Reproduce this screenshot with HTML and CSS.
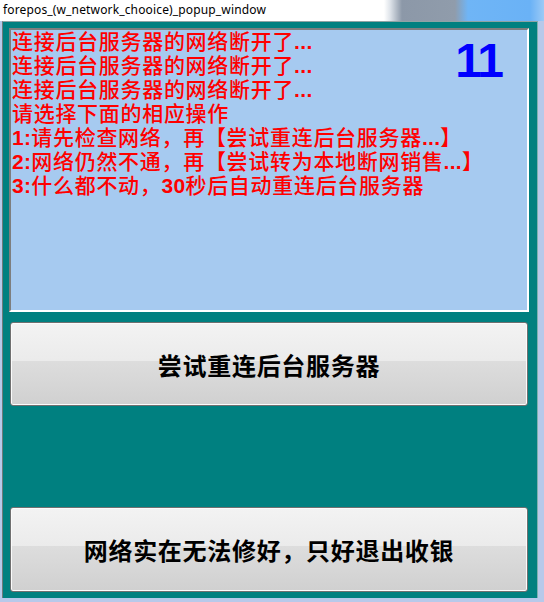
FILE: index.html
```html
<!DOCTYPE html>
<html lang="zh-CN">
<head>
<meta charset="utf-8">
<title>forepos_(w_network_chooice)_popup_window</title>
<link rel="stylesheet" href="styles.css">
</head>
<body>
<div class="titlebar"><span class="title">forepos_(w_network_chooice)_popup_window</span></div>
<div class="frame">
  <div class="msgbox">
    <div class="line">连接后台服务器的网络断开了<span class="lat">...</span></div>
    <div class="line">连接后台服务器的网络断开了<span class="lat">...</span></div>
    <div class="line">连接后台服务器的网络断开了<span class="lat">...</span></div>
    <div class="line">请选择下面的相应操作</div>
    <div class="line"><span class="lat">1:</span>请先检查网络，再【尝试重连后台服务器<span class="lat">...</span>】</div>
    <div class="line"><span class="lat">2:</span>网络仍然不通，再【尝试转为本地断网销售<span class="lat">...</span>】</div>
    <div class="line"><span class="lat">3:</span>什么都不动，<span class="lat">30</span>秒后自动重连后台服务器</div>
    <div class="countdown">11</div>
  </div>
  <button class="btn btn-retry">尝试重连后台服务器</button>
  <button class="btn btn-exit">网络实在无法修好，只好退出收银</button>
</div>
</body>
</html>
```
FILE: styles.css
```css
html, body {
  margin: 0;
  padding: 0;
}
body {
  width: 544px;
  height: 602px;
  overflow: hidden;
  background: #b7c9ea;
}
.titlebar {
  height: 21px;
  box-sizing: border-box;
  padding-left: 3px;
  background: linear-gradient(to right, #ffffff 0px, #ffffff 384px, #dfe4ea 390px, #8c98a8 402px, #909cab 455px, #6fb5f6 468px, #6ab2f6 530px, #9ccaf6 544px);
  display: flex;
  align-items: center;
}
.title {
  font-family: "Noto Sans", "Open Sans", sans-serif;
  font-size: 12px;
  letter-spacing: 0.15px;
  color: #000;
  line-height: 16px;
  padding-bottom: 2px;
}
.frame {
  margin-left: 2px;
  width: 536px;
  height: 577px;
  box-sizing: border-box;
  background: #008080;
  border-left: 1px solid #6f7a7a;
  border-top: 1px solid #8fa3a3;
  border-right: 1px solid #7fb0b0;
  padding: 6px 0 0 6px;
  display: flex;
  flex-direction: column;
}
.msgbox {
  position: relative;
  width: 520px;
  height: 284px;
  box-sizing: border-box;
  background: #a6caf0;
  border-style: solid;
  border-width: 2px;
  border-color: #7e7e7e #ffffff #ffffff #7e7e7e;
  padding: 0 0 0 1px;
  font-family: "Liberation Sans", "Noto Sans CJK SC", sans-serif;
  font-weight: 500;
  font-size: 21px;
  letter-spacing: 0.7px;
  line-height: 24px;
  color: #ff0000;
}
.line {
  white-space: nowrap;
}
.lat {
  font-weight: bold;
  letter-spacing: 0.3px;
}
.countdown {
  position: absolute;
  top: 7px;
  right: 25px;
  font-family: "Liberation Sans", sans-serif;
  font-weight: bold;
  font-size: 48px;
  line-height: 48px;
  letter-spacing: -2px;
  color: #0000ff;
}
.btn {
  display: flex;
  align-items: center;
  justify-content: center;
  width: 518px;
  margin-left: 1px;
  box-sizing: border-box;
  border: 1px solid #707070;
  border-radius: 3px;
  box-shadow: inset 0 0 0 1px #fbfbfb;
  background: linear-gradient(to bottom, #f3f3f3 0%, #ebebeb 46%, #dddddd 46%, #d0d0d0 100%);
  font-family: "Noto Sans CJK SC", sans-serif;
  font-weight: bold;
  font-size: 24px;
  letter-spacing: 0.7px;
  color: #000;
  padding: 0;
  cursor: default;
}
.btn-retry {
  height: 84px;
  margin-top: 10px;
}
.btn-exit {
  height: 85px;
  margin-top: 101px;
}
```
